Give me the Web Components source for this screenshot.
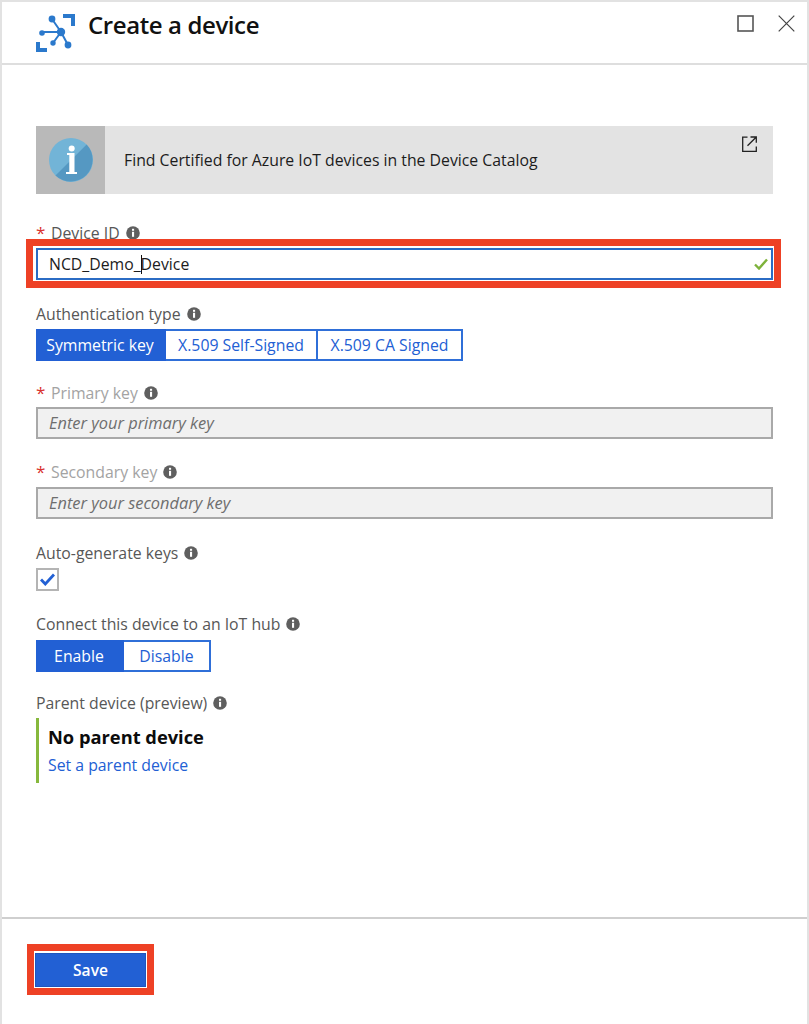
<!DOCTYPE html>
<html lang="en">
<head>
<meta charset="utf-8">
<title>Create a device</title>
<style>
  html, body { margin: 0; padding: 0; background: #fff; }
  body { font-family: "Open Sans", "Noto Sans", sans-serif; }
</style>
</head>
<body>
<az-blade>
  <az-blade-header slot="header">Create a device</az-blade-header>

  <az-info-banner>Find Certified for Azure IoT devices in the Device Catalog</az-info-banner>

  <az-field-label required style="margin-top:29px">Device ID</az-field-label>
  <az-highlight style="margin:-4px -8px 0 -10px; padding:2px 1px 1px 3px;">
    <az-text-input valid>NCD_Demo_<i></i>Device</az-text-input>
  </az-highlight>

  <az-field-label style="margin-top:16px">Authentication type</az-field-label>
  <az-segmented style="margin-top:5px" options="Symmetric key|X.509 Self-Signed|X.509 CA Signed" widths="130,152,145"></az-segmented>

  <az-field-label required muted style="margin-top:22px">Primary key</az-field-label>
  <az-text-input disabled style="margin-top:4px">Enter your primary key</az-text-input>

  <az-field-label required muted style="margin-top:23px">Secondary key</az-field-label>
  <az-text-input disabled style="margin-top:5px">Enter your secondary key</az-text-input>

  <az-field-label style="margin-top:24px">Auto-generate keys</az-field-label>
  <az-checkbox style="margin-top:5px"></az-checkbox>

  <az-field-label style="margin-top:23px">Connect this device to an IoT hub</az-field-label>
  <az-segmented style="margin-top:6px" options="Enable|Disable" widths="88,87"></az-segmented>

  <az-field-label style="margin-top:21px">Parent device (preview)</az-field-label>
  <az-parent-device style="margin-top:5px" title-text="No parent device">Set a parent device</az-parent-device>

  <az-highlight slot="footer" style="width:max-content; padding:2px 1px 1px 1px;">
    <az-button>Save</az-button>
  </az-highlight>
</az-blade>

<script>
class AzBlade extends HTMLElement {
  constructor() {
    super()
    this.attachShadow({ mode: 'open' })
    this.shadowRoot.innerHTML = `
      <style>
        :host {
          display: flex;
          flex-direction: column;
          box-sizing: border-box;
          width: 809px;
          height: 1024px;
          overflow: hidden;
          background: #fff;
          border-top: 2px solid #e2e2e2;
          border-left: 2px solid #e2e2e2;
          border-right: 2px solid #e2e2e2;
        }
        .body {
          flex: 1;
          display: flex;
          flex-direction: column;
          padding: 61px 34px 0 34px;
        }
        .footer {
          height: 107px;
          box-sizing: border-box;
          border-top: 2px solid #cfcfcf;
          padding: 25px 0 0 25px;
        }
      </style>
      <slot name="header"></slot>
      <div class="body"><slot></slot></div>
      <div class="footer"><slot name="footer"></slot></div>
    `
  }
}

class AzBladeHeader extends HTMLElement {
  constructor() {
    super()
    this.attachShadow({ mode: 'open' })
    this.shadowRoot.innerHTML = `
      <style>
        :host {
          display: flex;
          box-sizing: border-box;
          height: 63px;
          border-bottom: 2px solid #dedede;
          padding: 12px 12px 0 34px;
        }
        svg { flex: none; display: block; }
        .title {
          margin: -1px 0 0 13px;
          font-size: 24px;
          line-height: 24px;
          font-weight: 600;
          color: #111;
          letter-spacing: -0.4px;
          flex: 1;
        }
        .win { display: flex; gap: 24px; margin-top: 1px; }
      </style>
      <svg width="39" height="38" viewBox="0 0 39 38">
        <g fill="#2b79cc">
          <path d="M27 0h12v12h-4V4h-8z"/>
          <path d="M0 28h4v6h7v4H0z"/>
          <circle cx="25" cy="18" r="4.2"/>
          <circle cx="16" cy="5" r="3.4"/>
          <circle cx="6" cy="19" r="2.8"/>
          <circle cx="17" cy="29" r="2.7"/>
          <circle cx="32" cy="31" r="3.4"/>
        </g>
        <path d="M25 18 16 5M25 18H6M25 18l-8 11M25 18l7 13" stroke="#2b79cc" stroke-width="2" fill="none"/>
      </svg>
      <div class="title"><slot></slot></div>
      <div class="win">
        <svg width="17" height="17" viewBox="0 0 17 17"><rect x="1" y="1" width="15" height="15" fill="none" stroke="#555" stroke-width="1.6"/></svg>
        <svg width="17" height="17" viewBox="0 0 17 17"><path d="M.7.7l15.6 15.6M16.3.7.7 16.3" fill="none" stroke="#444" stroke-width="1.2"/></svg>
      </div>
    `
  }
}

class AzInfoBanner extends HTMLElement {
  constructor() {
    super()
    this.attachShadow({ mode: 'open' })
    this.shadowRoot.innerHTML = `
      <style>
        :host {
          display: flex;
          align-items: center;
          height: 68px;
          background: #e3e3e3;
          color: #1c1c1c;
          font-size: 15.8px;
        }
        .cell {
          width: 69px;
          align-self: stretch;
          background: #b9b9b9;
          display: flex;
          align-items: center;
          justify-content: center;
          flex: none;
        }
        .text { margin-left: 19px; flex: 1; }
        .open { align-self: flex-start; margin: 10px 16px 0 0; display: block; }
      </style>
      <div class="cell">
        <svg width="44" height="44" viewBox="0 0 44 44">
          <circle cx="22" cy="22" r="22" fill="#72b4d7"/>
          <path d="M37.6 6.5A22 22 0 0 1 6.5 37.6z" fill="#5598c2"/>
          <circle cx="22.7" cy="10.5" r="3" fill="#fff"/>
          <path d="M18 15h7.5v19H28v2H17v-2h3.3V17H18z" fill="#fff"/>
        </svg>
      </div>
      <div class="text"><slot></slot></div>
      <svg class="open" width="15" height="16" viewBox="0 0 15 16" fill="none" stroke="#222" stroke-width="1.3">
        <path d="M5.5 1.2H.7v14.1H14.3V10.5"/>
        <path d="M8.5 1h5.8v5.8M14.3 1 5.5 9.8"/>
      </svg>
    `
  }
}

class AzInfoDot extends HTMLElement {
  constructor() {
    super()
    this.attachShadow({ mode: 'open' })
    this.shadowRoot.innerHTML = `
      <style>:host { display: inline-block; width: 14px; height: 14px; } svg { display: block; }</style>
      <svg width="14" height="14" viewBox="0 0 14 14">
        <circle cx="7" cy="7" r="6.8" fill="#5f5f5f"/>
        <rect x="6" y="5.8" width="2.1" height="5" fill="#fff"/>
        <rect x="6" y="2.8" width="2.1" height="2" fill="#fff"/>
      </svg>
    `
  }
}

class AzFieldLabel extends HTMLElement {
  constructor() {
    super()
    this.attachShadow({ mode: 'open' })
    const required = this.hasAttribute('required')
    const muted = this.hasAttribute('muted')
    this.shadowRoot.innerHTML = `
      <style>
        :host {
          display: flex;
          align-items: center;
          height: 20px;
          font-size: 15.8px;
          color: ${muted ? '#a3a3a3' : '#575757'};
        }
        .star { color: #d9322e; width: 15px; font-size: 17px; line-height: 20px; }
        az-info-dot { margin-left: 6px; }
      </style>
      ${required ? '<span class="star">*</span>' : ''}
      <span><slot></slot></span>
      <az-info-dot></az-info-dot>
    `
  }
}

class AzHighlight extends HTMLElement {
  constructor() {
    super()
    this.attachShadow({ mode: 'open' })
    this.shadowRoot.innerHTML = `
      <style>
        :host {
          display: block;
          box-sizing: border-box;
          border: 7px solid #ee4125;
          padding: 2px;
          background: #fff;
          position: relative;
        }
      </style>
      <slot></slot>
    `
  }
}

class AzTextInput extends HTMLElement {
  constructor() {
    super()
    this.attachShadow({ mode: 'open' })
    const disabled = this.hasAttribute('disabled')
    const valid = this.hasAttribute('valid')
    this.shadowRoot.innerHTML = `
      <style>
        :host {
          display: flex;
          align-items: center;
          box-sizing: border-box;
          height: 32px;
          padding: 0 3px ${disabled ? '2px' : '0'} 11px;
          border: 2px solid ${disabled ? '#a9a9a9' : '#2b6cc4'};
          background: ${disabled ? '#f1f1f1' : '#fff'};
          color: ${disabled ? '#6e6e6e' : '#1c1c1c'};
          font-size: ${disabled ? '16.4px' : '15.8px'};
          font-style: ${disabled ? 'italic' : 'normal'};
        }
        .val { flex: 1; white-space: pre; }
        ::slotted(i) {
          display: inline-block;
          width: 1px;
          height: 19px;
          margin-right: -1px;
          vertical-align: -4px;
          background: #111;
        }
        svg { display: block; }
      </style>
      <div class="val"><slot></slot></div>
      ${valid ? '<svg width="14" height="12" viewBox="0 0 14 12"><path d="M1 6.5 5 10.5 13 1.5" fill="none" stroke="#7db23a" stroke-width="2.4"/></svg>' : ''}
    `
  }
}

class AzSegmented extends HTMLElement {
  constructor() {
    super()
    this.attachShadow({ mode: 'open' })
    const options = this.getAttribute('options').split('|')
    const widths = this.getAttribute('widths').split(',')
    const items = options.map((o, i) =>
      `<div class="seg${i === 0 ? ' on' : ''}" style="width:${widths[i]}px">${o}</div>`).join('')
    this.shadowRoot.innerHTML = `
      <style>
        :host { display: flex; font-size: 15.8px; color: #2260d4; }
        .seg {
          box-sizing: border-box;
          height: 32px;
          padding-bottom: 1px;
          display: flex;
          align-items: center;
          justify-content: center;
          border: 2px solid #2f6fd8;
          border-left-width: 0;
          background: #fff;
        }
        .seg:first-child { border-left-width: 2px; }
        .seg.on { background: #2260d4; color: #fff; border-color: #2260d4; }
      </style>
      ${items}
    `
  }
}

class AzCheckbox extends HTMLElement {
  constructor() {
    super()
    this.attachShadow({ mode: 'open' })
    this.shadowRoot.innerHTML = `
      <style>
        :host {
          display: flex;
          align-items: center;
          justify-content: center;
          box-sizing: border-box;
          width: 23px;
          height: 23px;
          border: 2px solid #b4b4b4;
          background: #fff;
        }
        svg { display: block; }
      </style>
      <svg width="15" height="13" viewBox="0 0 15 13"><path d="M1 6.5 5.3 11 14 1.5" fill="none" stroke="#2260d4" stroke-width="2.8"/></svg>
    `
  }
}

class AzParentDevice extends HTMLElement {
  constructor() {
    super()
    this.attachShadow({ mode: 'open' })
    this.shadowRoot.innerHTML = `
      <style>
        :host {
          display: block;
          box-sizing: border-box;
          height: 65px;
          border-left: 3px solid #86b83c;
          padding: 6px 0 0 9px;
        }
        .t { font-size: 18.3px; line-height: 25px; font-weight: 700; color: #0c0c0c; }
        .l { font-size: 15.8px; line-height: 20px; margin-top: 6px; color: #2260d4; }
      </style>
      <div class="t">${this.getAttribute('title-text')}</div>
      <div class="l"><slot></slot></div>
    `
  }
}

class AzButton extends HTMLElement {
  constructor() {
    super()
    this.attachShadow({ mode: 'open' })
    this.shadowRoot.innerHTML = `
      <style>
        :host {
          display: flex;
          align-items: center;
          justify-content: center;
          box-sizing: border-box;
          width: 111px;
          height: 34px;
          border: 1px solid #1f55bd;
          background: #2260d4;
          color: #fff;
          font-size: 15.6px;
          font-weight: 600;
        }
      </style>
      <slot></slot>
    `
  }
}

customElements.define('az-info-dot', AzInfoDot)
customElements.define('az-blade', AzBlade)
customElements.define('az-blade-header', AzBladeHeader)
customElements.define('az-info-banner', AzInfoBanner)
customElements.define('az-field-label', AzFieldLabel)
customElements.define('az-highlight', AzHighlight)
customElements.define('az-text-input', AzTextInput)
customElements.define('az-segmented', AzSegmented)
customElements.define('az-checkbox', AzCheckbox)
customElements.define('az-parent-device', AzParentDevice)
customElements.define('az-button', AzButton)
</script>
</body>
</html>
